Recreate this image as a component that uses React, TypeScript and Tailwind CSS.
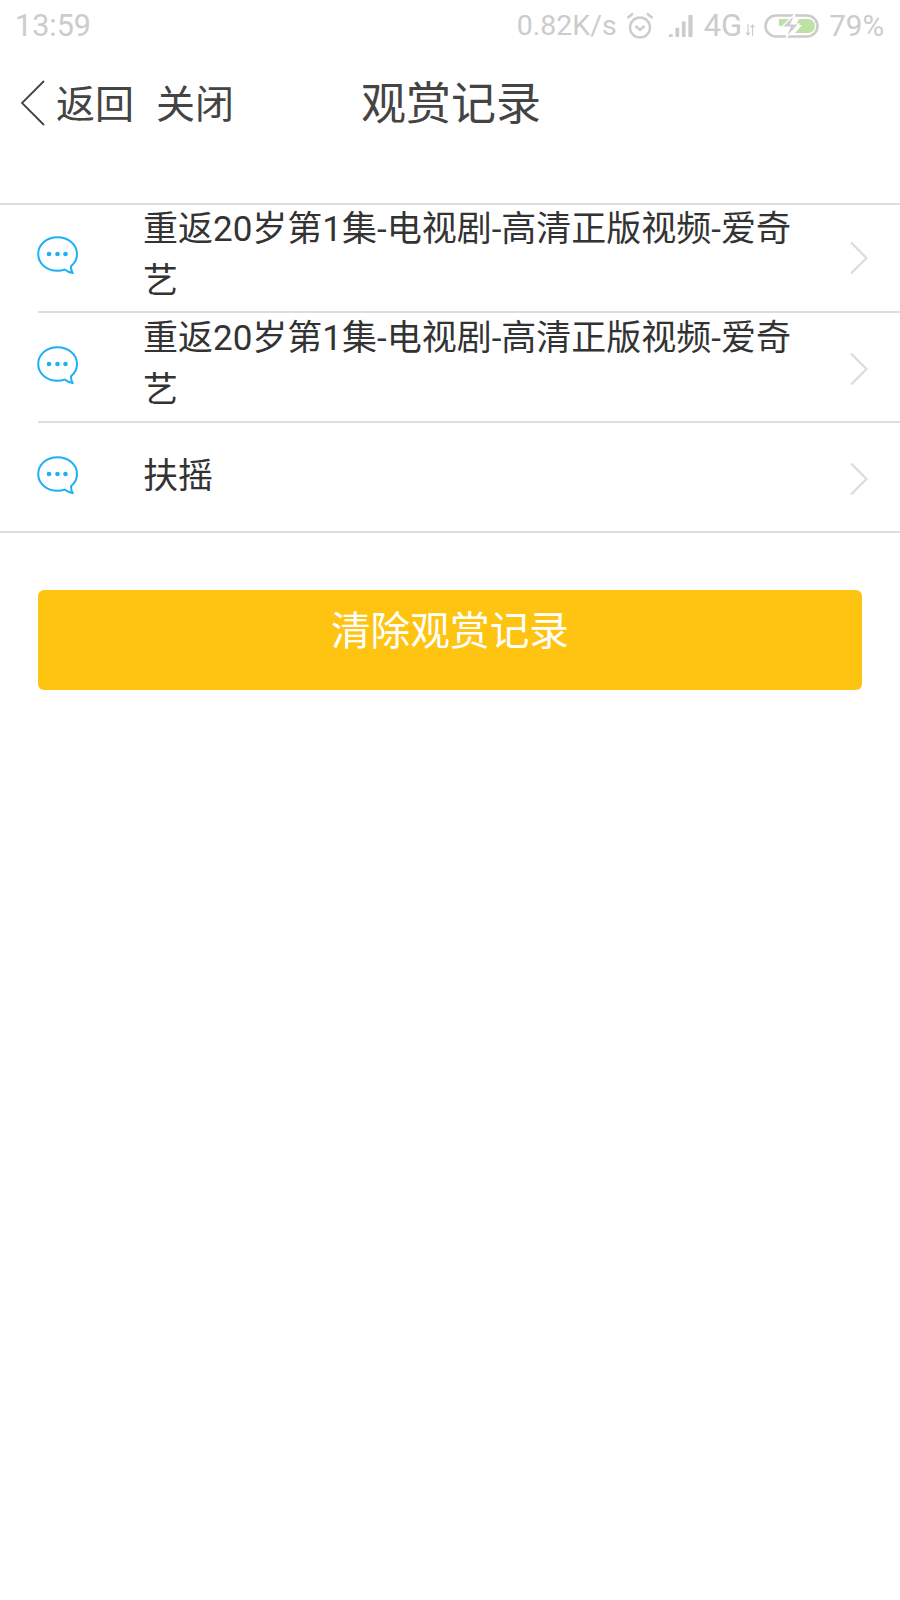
const FONT = "font-['Roboto','Noto_Sans_CJK_SC',sans-serif]";

function BubbleIcon() {
  return (
    <svg width="41" height="39" viewBox="0 0 41 39" fill="none">
      <path
        d="M20.500 1.200C9.800 1.200 1.200 8.300 1.200 18s8.600 16.800 19.300 16.800c2.600 0 5-.4 7.200-1.200 1.500 1.300 4 2.700 8 3.400-1.200-1.700-1.800-3.800-1.700-6.700 3.800-3.100 6-7.400 6-12.300C40 8.300 31.200 1.200 20.500 1.200Z"
        stroke="#1cb0f6"
        strokeWidth="2"
        strokeLinejoin="round"
      />
      <circle cx="12" cy="18" r="2.300" fill="#1cb0f6" />
      <circle cx="20.500" cy="18" r="2.300" fill="#1cb0f6" />
      <circle cx="28.500" cy="18" r="2.300" fill="#1cb0f6" />
    </svg>
  );
}

function Chevron() {
  return (
    <svg width="20" height="34" viewBox="0 0 20 34" fill="none">
      <path d="M2 1.500 17.500 17 2 32.500" stroke="#dcdcdc" strokeWidth="2.200" />
    </svg>
  );
}

function Row({ title, rowClass, textClass }: { title: string; rowClass: string; textClass?: string }) {
  return (
    <div className={`flex items-center ${rowClass}`}>
      <div className="mb-[3px] -ml-px w-[106px] shrink-0">
        <BubbleIcon />
      </div>
      <div className={`w-[660px] shrink-0 text-[35px] leading-[52px] text-[#333] ${textClass ?? ""}`}>{title}</div>
      <div className="ml-[46px] mt-[3px]">
        <Chevron />
      </div>
    </div>
  );
}

function StatusBar() {
  return (
    <div className="flex h-[52px] items-center justify-between pl-[15px] pr-[16px] text-[#cccccc]">
      <span className="text-[30.500px]">13:59</span>
      <div className="flex items-center">
        <span className="text-[28.500px]">0.82K/s</span>
        <svg className="ml-[8px]" width="30" height="30" viewBox="0 0 30 30" fill="none" stroke="#cccccc" strokeWidth="2.400">
          <circle cx="15" cy="16.500" r="10" />
          <path d="M10.500 15 15 19l4.500-4M2.500 7 8 2.500M27.500 7 22 2.500" />
        </svg>
        <svg className="ml-[12px]" width="28" height="24" viewBox="0 0 28 26" fill="#cccccc">
          <path d="M1 25v-3h4v3ZM8 25V15h4v10ZM15 25V8h4v17ZM22 25V1h4.500v24Z" />
        </svg>
        <span className="ml-[9px] text-[31px]">4G</span>
        <svg className="ml-[3px] mt-[8px]" width="10" height="14" viewBox="0 0 10 14" fill="none" stroke="#cccccc" strokeWidth="1.200">
          <path d="M3 1v11M1 9.500 3 12l2-2.500M7.500 13V2M5.500 4.500 7.500 2l2 2.500" />
        </svg>
        <svg className="ml-[9px]" width="55" height="24" viewBox="0 0 55 24" fill="none">
          <rect x="1.500" y="1.500" width="52" height="21" rx="10.500" stroke="#cccccc" strokeWidth="2.600" />
          <path d="M15 5h12l-5 7h-7ZM31 19h13a7 7 0 0 0 0-14H35l-3 6h6Z" fill="#bde3a4" />
          <path d="M31 0 18 13h8l-4 11 13-14h-8l4-10Z" fill="#cccccc" stroke="#fff" strokeWidth="1.200" />
        </svg>
        <span className="ml-[10px] text-[29.500px]">79%</span>
      </div>
    </div>
  );
}

export default function App() {
  return (
    <div className={`min-h-[1600px] w-[900px] bg-white ${FONT}`}>
      <StatusBar />

      <div className="flex h-[153px] items-start border-b-2 border-[#dedede] pt-[31px] text-[#444]">
        <div className="flex h-[44px] w-[361px] shrink-0 items-center pl-[20px]">
          <svg className="mb-[4px]" width="25" height="46" viewBox="0 0 25 46" fill="none">
            <path d="M24 1 2 23l22 22" stroke="#444" strokeWidth="1.800" />
          </svg>
          <span className="ml-[11px] text-[39px]">返回</span>
          <span className="ml-[22px] text-[39px]">关闭</span>
        </div>
        <span className="text-[45px] leading-[44px]">观赏记录</span>
      </div>

      <div className="pl-[38px]">
        <Row
          title="重返20岁第1集-电视剧-高清正版视频-爱奇艺"
          rowClass="h-[108px] border-b-2 border-[#dedede] pb-[3px]"
          textClass="mb-[1px]"
        />
        <Row
          title="重返20岁第1集-电视剧-高清正版视频-爱奇艺"
          rowClass="h-[110px] border-b-2 border-[#dedede]"
          textClass="mb-[4px]"
        />
      </div>
      <div className="border-b-2 border-[#dedede] pl-[38px]">
        <Row title="扶摇" rowClass="h-[108px]" />
      </div>

      <div className="px-[38px] pt-[57px]">
        <button className="h-[100px] w-full rounded-[6px] bg-[#ffc412] pb-[16px] text-[39.700px] text-white">
          清除观赏记录
        </button>
      </div>
    </div>
  );
}
